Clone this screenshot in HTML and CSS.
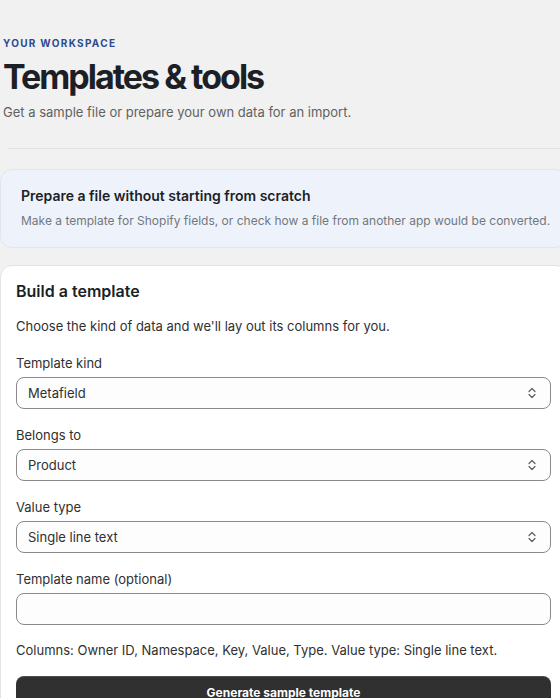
FILE: index.html
```html
<!DOCTYPE html>
<html lang="en">
<head>
<meta charset="utf-8">
<title>Templates &amp; tools</title>
<link rel="stylesheet" href="styles.css">
</head>
<body>
<main class="page">
  <header class="head">
    <div class="eyebrow">YOUR WORKSPACE</div>
    <h1 class="title">Templates &amp; tools</h1>
    <p class="subtitle">Get a sample file or prepare your own data for an import.</p>
  </header>
  <hr class="divider">
  <section class="notice">
    <h2 class="notice-title">Prepare a file without starting from scratch</h2>
    <p class="notice-text">Make a template for Shopify fields, or check how a file from another app would be converted.</p>
  </section>
  <section class="card">
    <h2 class="card-title">Build a template</h2>
    <p class="card-text">Choose the kind of data and we'll lay out its columns for you.</p>
    <div class="fields">
      <div class="field">
        <div class="label">Template kind</div>
        <div class="select"><span>Metafield</span>
          <svg class="chev" width="10" height="12" viewBox="0 0 10 12"><path d="M2 4.5 5 1.5 8 4.5M2 7.5 5 10.5 8 7.5" fill="none" stroke="#5c5c5c" stroke-width="1.2" stroke-linecap="round" stroke-linejoin="round"/></svg>
        </div>
      </div>
      <div class="field">
        <div class="label">Belongs to</div>
        <div class="select"><span>Product</span>
          <svg class="chev" width="10" height="12" viewBox="0 0 10 12"><path d="M2 4.5 5 1.5 8 4.5M2 7.5 5 10.5 8 7.5" fill="none" stroke="#5c5c5c" stroke-width="1.2" stroke-linecap="round" stroke-linejoin="round"/></svg>
        </div>
      </div>
      <div class="field">
        <div class="label">Value type</div>
        <div class="select"><span>Single line text</span>
          <svg class="chev" width="10" height="12" viewBox="0 0 10 12"><path d="M2 4.5 5 1.5 8 4.5M2 7.5 5 10.5 8 7.5" fill="none" stroke="#5c5c5c" stroke-width="1.2" stroke-linecap="round" stroke-linejoin="round"/></svg>
        </div>
      </div>
      <div class="field">
        <div class="label">Template name (optional)</div>
        <div class="select input"></div>
      </div>
    </div>
    <p class="columns">Columns: Owner ID, Namespace, Key, Value, Type. Value type: Single line text.</p>
    <div class="button">Generate sample template</div>
  </section>
</main>
</body>
</html>
```

FILE: styles.css
```css
html, body {
  margin: 0;
  padding: 0;
  overflow: hidden;
  background: #f1f1f1;
}
body {
  font-family: Inter, "Noto Sans", sans-serif;
  color: #303030;
}
.page {
  width: 567px;
}
.head {
  padding: 36px 0 0 3px;
}
.eyebrow {
  font-size: 10px;
  line-height: 14px;
  font-weight: 700;
  letter-spacing: 1.3px;
  color: #2c4b8f;
}
.title {
  margin: 7px 0 0;
  font-size: 34px;
  line-height: 40px;
  font-weight: 700;
  letter-spacing: -2px;
  color: #1c1f26;
}
.subtitle {
  margin: 5px 0 0;
  font-size: 13px;
  line-height: 20px;
  color: #616161;
}
.divider {
  margin: 26px 0 0 8px;
  border: 0;
  border-top: 1px solid #e3e3e3;
  height: 0;
}
.notice {
  margin-top: 20px;
  background: #eef3fb;
  border: 1px solid #e1e6ee;
  border-radius: 12px;
  padding: 16px 20px;
  white-space: nowrap;
}
.notice-title {
  margin: 0;
  font-size: 14px;
  line-height: 20px;
  font-weight: 600;
  color: #1c1f26;
}
.notice-text {
  margin: 5px 0 0;
  font-size: 12px;
  line-height: 20px;
  color: #73777c;
}
.card {
  margin-top: 17px;
  background: #ffffff;
  border: 1px solid #e3e3e3;
  border-radius: 12px;
  padding: 13px 15px 16px;
}
.card-title {
  margin: 0;
  font-size: 16px;
  line-height: 24px;
  font-weight: 600;
  color: #1c1f26;
}
.card-text {
  margin: 13px 0 0;
  font-size: 13px;
  line-height: 20px;
}
.fields {
  margin-top: 18px;
  display: flex;
  flex-direction: column;
  gap: 17px;
}
.field {
  display: flex;
  flex-direction: column;
  gap: 5px;
}
.label {
  font-size: 13px;
  line-height: 18px;
  color: #303030;
}
.select {
  height: 32px;
  box-sizing: border-box;
  border: 1px solid #8a8a8a;
  border-radius: 8px;
  background: #fdfdfd;
  display: flex;
  align-items: center;
  justify-content: space-between;
  padding: 0 13px 0 11px;
  font-size: 13px;
  color: #303030;
}
.chev {
  display: block;
}
.columns {
  margin: 15px 0 0;
  font-size: 13px;
  line-height: 20px;
}
.button {
  margin-top: 16px;
  height: 32px;
  border-radius: 8px;
  background: #303030;
  color: #ffffff;
  font-size: 12px;
  font-weight: 700;
  display: flex;
  align-items: center;
  justify-content: center;
  box-shadow: inset 0 1px 0 rgba(255,255,255,0.15);
}
```
